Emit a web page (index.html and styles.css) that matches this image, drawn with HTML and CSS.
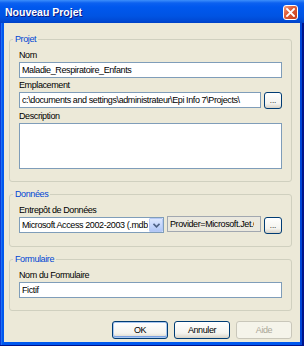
FILE: index.html
```html
<!DOCTYPE html>
<html lang="fr">
<head>
    <meta charset="UTF-8">
    <meta name="viewport" content="width=device-width, initial-scale=1.0">
    <title>Nouveau Projet</title>
    <link rel="stylesheet" href="styles.css">
</head>
<body>
    <div class="window">
        <div class="titlebar">
            <span class="title">Nouveau Projet</span>
            <button type="button" class="close-btn" aria-label="Fermer">
                <svg width="9" height="9" viewBox="0 0 9 9">
                    <path d="M1 1 L8 8 M8 1 L1 8" stroke="#fff" stroke-width="1.8" stroke-linecap="square"/>
                </svg>
            </button>
        </div>

        <div class="dialog">
            <fieldset class="group">
                <legend>Projet</legend>
                <label class="field-label" for="nom">Nom</label>
                <input type="text" id="nom" class="text-input" value="Maladie_Respiratoire_Enfants">

                <label class="field-label" for="emplacement">Emplacement</label>
                <div class="input-row">
                    <input type="text" id="emplacement" class="text-input" value="c:\documents and settings\administrateur\Epi Info 7\Projects\">
                    <button type="button" class="browse-btn">...</button>
                </div>

                <label class="field-label" for="description">Description</label>
                <textarea id="description" class="text-input text-area"></textarea>
            </fieldset>

            <fieldset class="group">
                <legend>Données</legend>
                <label class="field-label">Entrepôt de Données</label>
                <div class="input-row">
                    <div class="combo">
                        <span class="combo-text">Microsoft Access 2002-2003 (.mdb)</span>
                        <span class="combo-btn">
                            <svg width="7" height="5" viewBox="0 0 7 5">
                                <path d="M0.5 0.8 L3.5 3.8 L6.5 0.8" fill="none" stroke="#4d6185" stroke-width="1.6"/>
                            </svg>
                        </span>
                    </div>
                    <input type="text" class="text-input readonly" value="Provider=Microsoft.Jet.OLEDB.4.0" readonly>
                    <button type="button" class="browse-btn">...</button>
                </div>
            </fieldset>

            <fieldset class="group">
                <legend>Formulaire</legend>
                <label class="field-label" for="formulaire">Nom du Formulaire</label>
                <input type="text" id="formulaire" class="text-input" value="Fictif">
            </fieldset>

            <div class="actions">
                <button type="button" class="btn btn-default">OK</button>
                <button type="button" class="btn">Annuler</button>
                <button type="button" class="btn" disabled>Aide</button>
            </div>
        </div>
    </div>
</body>
</html>
```

FILE: styles.css
```css
* { margin: 0; padding: 0; box-sizing: border-box; }
body {
    font-family: "Liberation Sans", Arial, sans-serif;
    font-size: 9px;
    letter-spacing: -0.4px;
    background: #ece9d8;
}

.window {
    width: 304px;
    height: 346px;
    display: flex;
    flex-direction: column;
    padding: 0 4px 4px 4px;
    background: linear-gradient(to right, #0a3bd7 0, #0a3bd7 1px, #1f6ff5 1px, #1f6ff5 2px, #0058ee 2px, #0058ee 300px, #0046d8 300px, #0046d8 302px, #00138c 302px);
    box-shadow: inset 0 -1px 0 #00138c;
}

.titlebar {
    height: 23px;
    margin: 0 -4px;
    padding: 0 6px 0 5px;
    display: flex;
    align-items: center;
    justify-content: space-between;
    background: linear-gradient(#3d8ffb 0, #0c61f0 3px, #0058ee 7px, #0054e3 16px, #0049d4 21px, #0041c6 23px);
}

.title {
    color: #fff;
    font-weight: bold;
    font-size: 10.5px;
    letter-spacing: 0;
    text-shadow: 1px 1px #0a1883;
    margin-top: 1px;
}

.close-btn {
    width: 15px;
    height: 15px;
    margin-top: 2px;
    border: 1px solid #fff;
    border-radius: 3px;
    background: linear-gradient(135deg, #f0a58c 0, #e0643f 35%, #c73b17 100%);
    display: flex;
    align-items: center;
    justify-content: center;
}

.dialog {
    flex: 1;
    background: #ece9d8;
    padding: 10px 8px 0 5px;
    display: flex;
    flex-direction: column;
}

.group {
    border: 1px solid #d0d0bf;
    border-radius: 3px;
    padding: 4px 9px 12px 9px;
    min-width: 0;
    display: flex;
    flex-direction: column;
}

.group + .group {
    margin-top: 6px;
}

.group legend {
    color: #0046d5;
    line-height: 12px;
    padding: 0 2px;
    margin-left: -6px;
}

.field-label {
    display: block;
    color: #000;
    line-height: 12px;
    margin-bottom: 1px;
}

.field-label:not(:first-of-type) {
    margin-top: 1px;
}

.text-input {
    display: block;
    width: 100%;
    height: 16px;
    border: 1px solid #7f9db9;
    background: #fff;
    padding: 0 2px;
    font: inherit;
    letter-spacing: inherit;
    line-height: 14px;
    color: #000;
    outline: none;
}

.text-area {
    height: 46px;
    resize: none;
}

.input-row {
    display: flex;
    gap: 3px;
    align-items: flex-start;
}

.input-row .text-input {
    flex: 1;
    width: auto;
    min-width: 0;
}

.input-row .readonly {
    flex: none;
    width: 94px;
    margin-top: -1px;
    padding-right: 6px;
    background: #ebe9df;
    border-color: #a2a8b0;
}

.combo {
    flex: none;
    width: 145px;
    min-width: 0;
    height: 16px;
    display: flex;
    border: 1px solid #7f9db9;
    background: #fff;
}

.combo-text {
    flex: 1;
    min-width: 0;
    padding-left: 2px;
    line-height: 14px;
    white-space: nowrap;
    overflow: hidden;
}

.combo-btn {
    flex: none;
    width: 14px;
    margin-left: 1px;
    border: 1px solid #b6c9f5;
    border-radius: 1px;
    background: linear-gradient(#dce7fd, #c2d4fb 60%, #b0c6f5);
    display: flex;
    align-items: center;
    justify-content: center;
}

.browse-btn {
    flex: none;
    width: 18px;
    height: 17px;
    border: 1px solid #003c74;
    border-radius: 3px;
    background: linear-gradient(#ffffff, #f4f3ee 70%, #d8d3c8);
    font: inherit;
    font-size: 8px;
    letter-spacing: 0;
    line-height: 11px;
    color: #000;
}

.actions {
    display: flex;
    justify-content: flex-end;
    gap: 6px;
    margin-top: 10px;
}

.btn {
    width: 56px;
    height: 18px;
    border: 1px solid #003c74;
    border-radius: 3px;
    background: linear-gradient(#ffffff, #f4f3ee 70%, #d8d3c8);
    font: inherit;
    letter-spacing: inherit;
    color: #000;
}

.btn-default {
    box-shadow: inset 0 0 0 1px #a9c7f0, inset 0 -1px 0 1px #7aa0e0;
}

.btn:disabled {
    border-color: #c9c7ba;
    background: #f5f4ea;
    color: #aca899;
}
```
